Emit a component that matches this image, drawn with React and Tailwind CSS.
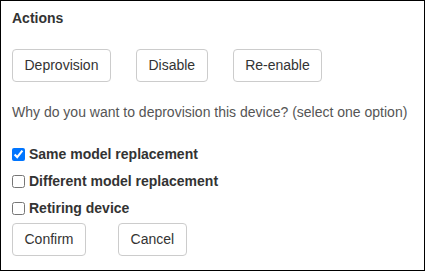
export default function App() {
  const options = [
    { id: "same", label: "Same model replacement", checked: true },
    { id: "different", label: "Different model replacement", checked: false },
    { id: "retiring", label: "Retiring device", checked: false },
  ];

  const btn =
    "h-[33px] rounded-[4px] border border-[#cccccc] bg-white px-[11.5px] text-[14px] text-[#333333]";

  return (
    <div className="h-[271px] w-[425px] border border-black bg-white pl-[11px] pt-[7px] font-['Liberation_Sans',Arial,sans-serif]">
      {/* Header */}
      <h3 className="text-[14px] font-bold leading-5 text-[#333333]">Actions</h3>

      {/* Action buttons */}
      <div className="mt-[21px] flex gap-[25px]">
        <button className={btn}>Deprovision</button>
        <button className={btn}>Disable</button>
        <button className={btn}>Re-enable</button>
      </div>

      <p className="mt-5 text-[14px] leading-5 text-[#555555]">
        Why do you want to deprovision this device? (select one option)
      </p>

      {/* Reasons */}
      <div className="mt-[22px] flex flex-col gap-[7px]">
        {options.map((o) => (
          <label key={o.id} className="flex h-5 items-center gap-1">
            <input
              type="checkbox"
              defaultChecked={o.checked}
              className="m-0 h-[13px] w-[13px] accent-[#0075ff]"
            />
            <span className="text-[14px] font-bold text-[#333333]">{o.label}</span>
          </label>
        ))}
      </div>

      <div className="mt-[5px] flex gap-[32px]">
        <button className={btn}>Confirm</button>
        <button className={btn}>Cancel</button>
      </div>
    </div>
  );
}
